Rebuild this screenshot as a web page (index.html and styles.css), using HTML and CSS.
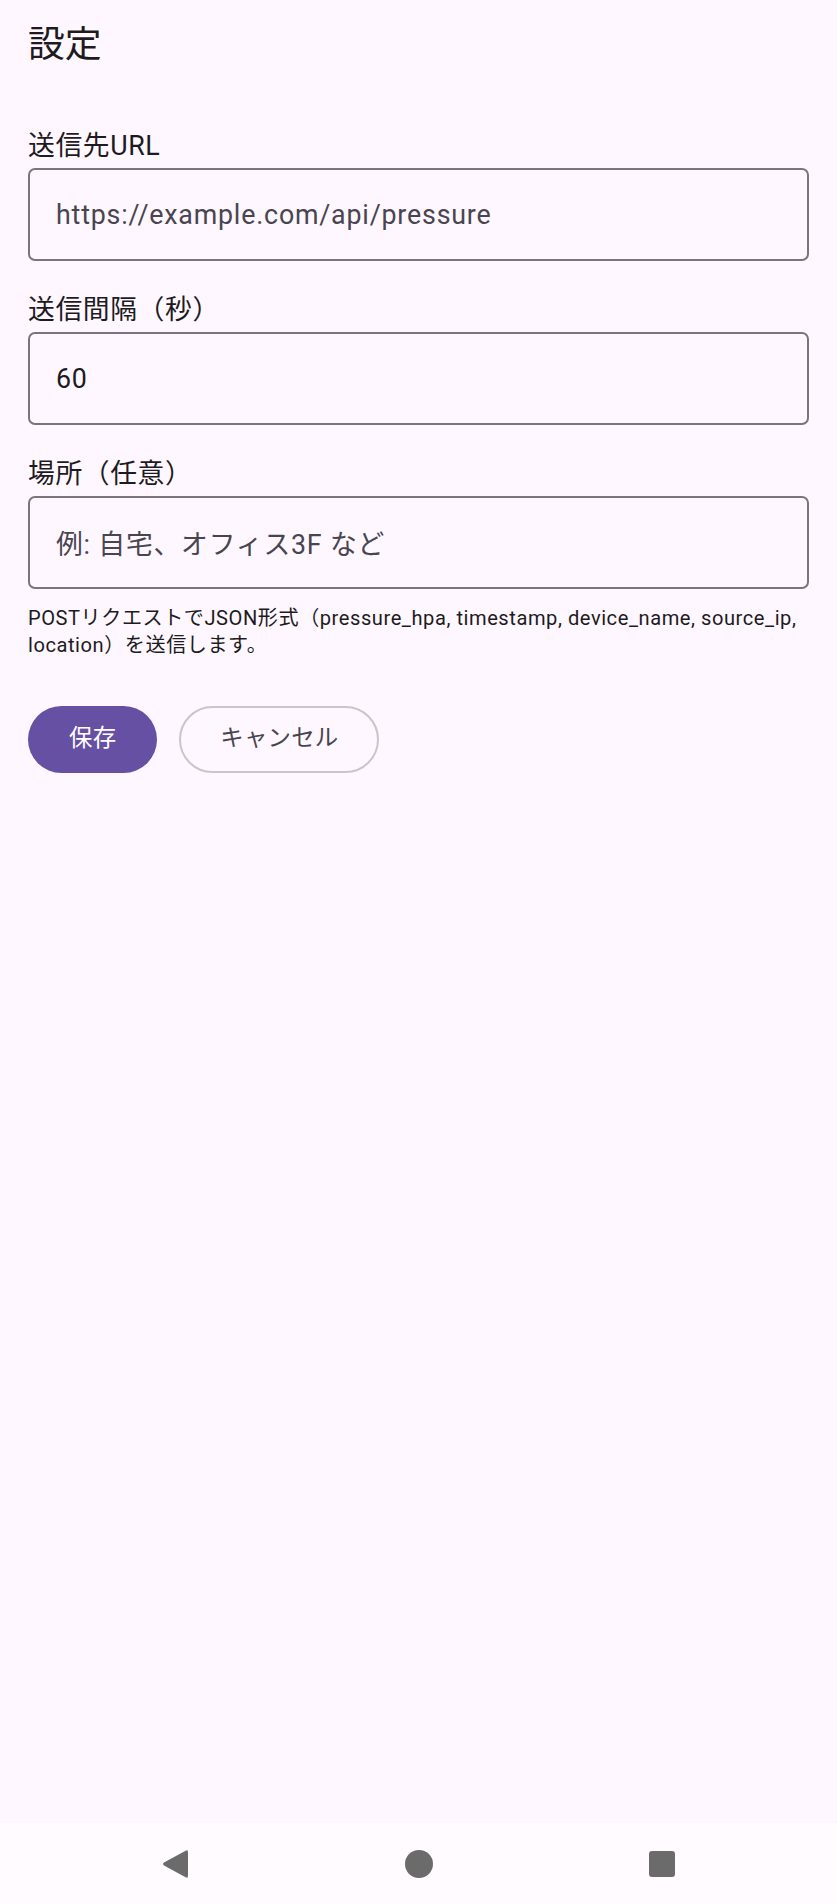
FILE: index.html
```html
<!DOCTYPE html>
<html lang="ja">
<head>
<meta charset="utf-8">
<title>設定</title>
<link rel="stylesheet" href="styles.css">
</head>
<body>
<div class="screen">
  <main class="content">
    <h1 class="title">設定</h1>
    <div class="fields">
      <div class="field-group">
        <div class="label">送信先URL</div>
        <div class="field"><span class="placeholder">https://example.com/api/pressure</span></div>
      </div>
      <div class="field-group">
        <div class="label">送信間隔（秒）</div>
        <div class="field"><span class="value">60</span></div>
      </div>
      <div class="field-group">
        <div class="label">場所（任意）</div>
        <div class="field"><span class="placeholder">例: 自宅、オフィス3F など</span></div>
      </div>
    </div>
    <p class="help">POSTリクエストでJSON形式（pressure_hpa, timestamp, device_name, source_ip, location）を送信します。</p>
    <div class="actions">
      <button class="btn btn-filled" type="button">保存</button>
      <button class="btn btn-outlined" type="button">キャンセル</button>
    </div>
  </main>
  <nav class="navbar">
    <div class="nav-slot">
      <svg class="nav-back" width="27" height="30" viewBox="0 0 27 30" aria-hidden="true">
        <path d="M26 3.2 L26 26.8 Q26 29.6 23.6 28.2 L2 16.4 Q0 15 2 13.6 L23.6 1.8 Q26 0.4 26 3.2 Z" fill="#6b6b6b"/>
      </svg>
    </div>
    <div class="nav-slot"><span class="nav-home"></span></div>
    <div class="nav-slot"><span class="nav-recent"></span></div>
  </nav>
</div>
</body>
</html>
```

FILE: styles.css
```css
html, body {
  margin: 0;
  padding: 0;
}

body {
  background: #fef7ff;
  font-family: Roboto, "Noto Sans CJK JP", sans-serif;
  color: #1d1b20;
}

.screen {
  width: 837px;
  height: 1904px;
  display: flex;
  flex-direction: column;
}

.content {
  flex: 1;
  padding: 21px 28px 0;
}

.title {
  margin: 0;
  font-size: 36.85px;
  line-height: 47px;
  font-weight: 400;
}

.fields {
  margin-top: 58px;
  display: flex;
  flex-direction: column;
  gap: 29px;
}

.field-group {
  display: flex;
  flex-direction: column;
}

.label {
  font-size: 26.8px;
  line-height: 40px;
  letter-spacing: 0.6px;
  margin-bottom: 2px;
}

.field {
  box-sizing: border-box;
  height: 93px;
  border: 2px solid #79747e;
  border-radius: 7px;
  padding: 0 26px;
  display: flex;
  align-items: center;
  font-size: 26.8px;
  letter-spacing: 0.8px;
}

.placeholder {
  color: #49454f;
}

.value {
  color: #1d1b20;
}

.help {
  margin: 16px 0 0;
  font-size: 20.1px;
  line-height: 26.8px;
  letter-spacing: 0.55px;
  color: #1d1b20;
}

.actions {
  margin-top: 47px;
  display: flex;
  gap: 22px;
}

.btn {
  box-sizing: border-box;
  height: 67px;
  border-radius: 34px;
  font-family: Roboto, "Noto Sans CJK JP", sans-serif;
  font-size: 23.45px;
  font-weight: 400;
  letter-spacing: 0.2px;
  line-height: 1;
  cursor: pointer;
}

.btn-filled {
  background: #6650a4;
  color: #ffffff;
  border: none;
  padding: 0 41px;
}

.btn-outlined {
  background: transparent;
  color: #49454f;
  border: 2px solid #cac4d0;
  padding: 0 39px;
}

.navbar {
  height: 81px;
  background: #fffbff;
  display: flex;
  justify-content: center;
  align-items: center;
}

.nav-slot {
  width: 243px;
  height: 81px;
  display: flex;
  justify-content: center;
  align-items: center;
}

.nav-back {
  display: block;
  margin-left: -1px;
}

.nav-home {
  width: 28px;
  height: 28px;
  border-radius: 50%;
  background: #6b6b6b;
}

.nav-recent {
  width: 26px;
  height: 26px;
  border-radius: 3px;
  background: #6b6b6b;
}
```
